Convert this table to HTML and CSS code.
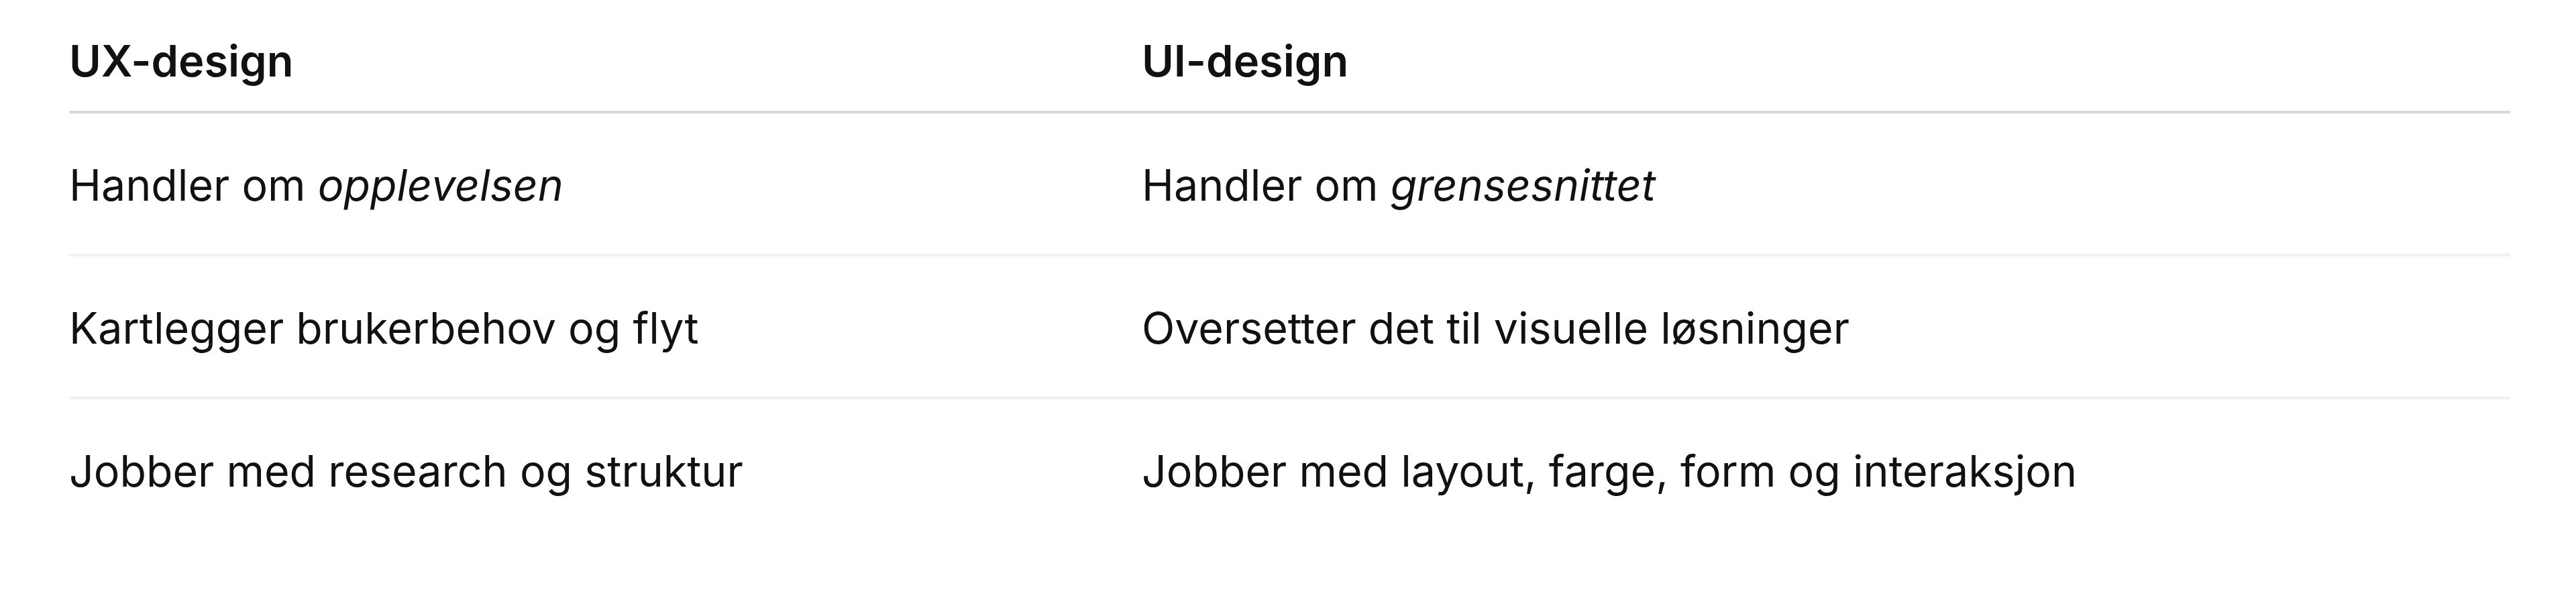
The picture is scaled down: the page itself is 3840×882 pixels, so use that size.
FILE: index.html
```html
<!DOCTYPE html>
<html lang="no">
<head>
<meta charset="utf-8">
<title>UX vs UI</title>
<link rel="stylesheet" href="styles.css">
</head>
<body>
<table class="compare">
  <thead>
    <tr>
      <th class="col-ux">UX-design</th>
      <th>UI-design</th>
    </tr>
  </thead>
  <tbody>
    <tr>
      <td>Handler om <em>opplevelsen</em></td>
      <td>Handler om <em>grensesnittet</em></td>
    </tr>
    <tr>
      <td>Kartlegger brukerbehov og flyt</td>
      <td>Oversetter det til visuelle løsninger</td>
    </tr>
    <tr>
      <td>Jobber med research og struktur</td>
      <td>Jobber med layout, farge, form og interaksjon</td>
    </tr>
  </tbody>
</table>
</body>
</html>
```
FILE: styles.css
```css
html, body {
  margin: 0;
  background: #ffffff;
}
body {
  font-family: Inter, "Noto Sans", "Liberation Sans", sans-serif;
  color: #111111;
}
.compare {
  margin-left: 103px;
  width: 3639px;
  border-collapse: collapse;
  table-layout: fixed;
}
.compare th,
.compare td {
  text-align: left;
  line-height: 80px;
  padding: 0;
}
.compare th {
  font-size: 65px;
  font-weight: 600;
  padding-top: 51px;
  padding-bottom: 34px;
  border-bottom: 4px solid #d8d8d8;
}
.compare .col-ux {
  width: 1599px;
}
.compare td {
  font-size: 64.5px;
  font-weight: 400;
  padding-top: 67px;
  padding-bottom: 62px;
  border-bottom: 4px solid #f0f0f0;
}
.compare tbody tr:last-child td {
  border-bottom: none;
}
.compare em {
  font-style: italic;
}
```
